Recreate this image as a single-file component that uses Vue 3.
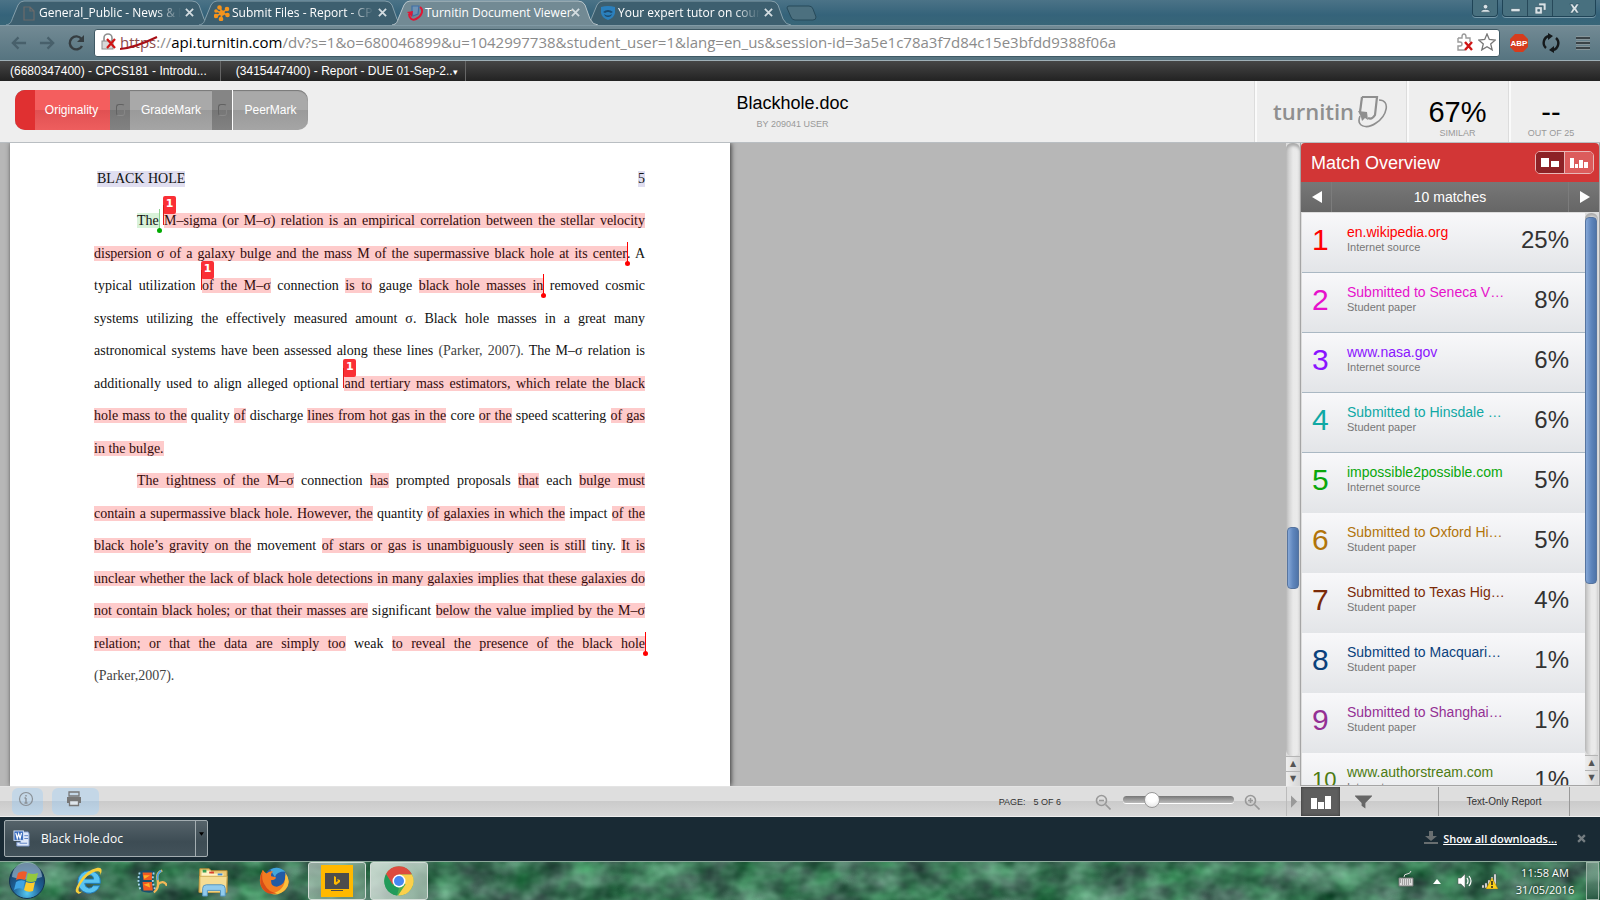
<script setup>
import { ref } from 'vue'

const tabs = [
  { title: 'General_Public - News & E', icon: 'file' },
  { title: 'Submit Files - Report - CP', icon: 'hub' },
  { title: 'Turnitin Document Viewer', icon: 'turnitin', active: true },
  { title: 'Your expert tutor on cour', icon: 'shield' }
]

const path = ref('/dv?s=1&o=680046899&u=1042997738&student_user=1&lang=en_us&session-id=3a5e1c78a3f7d84c15e3bfdd9388f06a')
const zoom = ref(22)

// Segments: t = text, m = matched, g = green match, f = faint, badge/pin = flag at start/end
const lines = [
  { indent: true, s: [{ t: 'The', g: 1, pin: 1 }, { t: ' ' }, { t: 'M–sigma (or M–σ) relation is an empirical correlation between the stellar velocity', m: 1, badge: 1 }] },
  { s: [{ t: 'dispersion σ of a galaxy bulge and the mass M of the supermassive black hole at its center', m: 1, pin: 1 }, { t: '. A' }] },
  { s: [{ t: 'typical utilization ' }, { t: 'of the M–σ', m: 1, badge: 1 }, { t: ' connection ' }, { t: 'is to', m: 1 }, { t: ' gauge ' }, { t: 'black hole masses in', m: 1, pin: 1 }, { t: ' removed cosmic' }] },
  { s: [{ t: 'systems utilizing the effectively measured amount σ. Black hole masses in a great many' }] },
  { s: [{ t: 'astronomical systems have been assessed along these lines ' }, { t: '(Parker, 2007).', f: 1 }, { t: ' The M–σ relation is' }] },
  { s: [{ t: 'additionally used to align alleged optional ' }, { t: 'and tertiary mass estimators, which relate the black', m: 1, badge: 1 }] },
  { s: [{ t: 'hole mass to the', m: 1 }, { t: ' quality ' }, { t: 'of', m: 1 }, { t: ' discharge ' }, { t: 'lines from hot gas in the', m: 1 }, { t: ' core ' }, { t: 'or the', m: 1 }, { t: ' speed scattering ' }, { t: 'of gas', m: 1 }] },
  { end: true, s: [{ t: 'in the bulge.', m: 1 }] },
  { indent: true, s: [{ t: 'The tightness of the M–σ', m: 1 }, { t: ' connection ' }, { t: 'has', m: 1 }, { t: ' prompted proposals ' }, { t: 'that', m: 1 }, { t: ' each ' }, { t: 'bulge must', m: 1 }] },
  { s: [{ t: 'contain a supermassive black hole. However, the', m: 1 }, { t: ' quantity ' }, { t: 'of galaxies in which the', m: 1 }, { t: ' impact ' }, { t: 'of the', m: 1 }] },
  { s: [{ t: 'black hole’s gravity on the', m: 1 }, { t: ' movement ' }, { t: 'of stars or gas is unambiguously seen is still', m: 1 }, { t: ' tiny. ' }, { t: 'It is', m: 1 }] },
  { s: [{ t: 'unclear whether the lack of black hole detections in many galaxies implies that these galaxies do', m: 1 }] },
  { s: [{ t: 'not contain black holes; or that their masses are', m: 1 }, { t: ' significant ' }, { t: 'below the value implied by the M–σ', m: 1 }] },
  { s: [{ t: 'relation; or that the data are simply too', m: 1 }, { t: ' weak ' }, { t: 'to reveal the presence of the black hole', m: 1, pin: 1 }] },
  { end: true, s: [{ t: '(Parker,2007).', f: 1 }] }
]

const matches = [
  { name: 'en.wikipedia.org', kind: 'Internet source', pct: 25, color: '#ff0000' },
  { name: 'Submitted to Seneca V…', kind: 'Student paper', pct: 8, color: '#e611cb' },
  { name: 'www.nasa.gov', kind: 'Internet source', pct: 6, color: '#8a14ff' },
  { name: 'Submitted to Hinsdale …', kind: 'Student paper', pct: 6, color: '#0fa8a4' },
  { name: 'impossible2possible.com', kind: 'Internet source', pct: 5, color: '#09a70c' },
  { name: 'Submitted to Oxford Hi…', kind: 'Student paper', pct: 5, color: '#b1740a' },
  { name: 'Submitted to Texas Hig…', kind: 'Student paper', pct: 4, color: '#7b2a08' },
  { name: 'Submitted to Macquari…', kind: 'Student paper', pct: 1, color: '#0a417c' },
  { name: 'Submitted to Shanghai…', kind: 'Student paper', pct: 1, color: '#943094' },
  { name: 'www.authorstream.com', kind: 'Internet source', pct: 1, color: '#4c7a12' }
]
</script>

<template>
  <div class="screen">
    <header class="strip">
      <nav class="tabs" aria-label="Browser tabs">
        <div v-for="t in tabs" :key="t.title" class="tab" :class="{ active: t.active }">
          <svg class="shape" viewBox="0 0 206 25" preserveAspectRatio="none" aria-hidden="true">
            <path d="M0 25 C5 24 5 22 7 17 L12 5 Q14 1 18 1 H186 Q191 1 193 5 L198 19 Q201 25 206 25" />
          </svg>
          <svg v-if="t.icon === 'file'" class="fav" viewBox="0 0 16 16"><path d="M3 2h6l4 4v9H3z M9 2v4h4" fill="none" stroke="#6b6b6b" stroke-width="1.2" /></svg>
          <svg v-else-if="t.icon === 'hub'" class="fav" viewBox="0 0 16 16">
            <g stroke="#f6941d" stroke-width="1.6" fill="#f6941d"><path d="M8 8L6 2M8 8L13 4M8 8L14 10M8 8L7 14M8 8L2 11M8 8L2 6" />
              <circle cx="5.500" cy="2.500" r="1.500" /><circle cx="13" cy="4" r="1.500" /><circle cx="13.500" cy="10" r="1.500" /><circle cx="7" cy="14" r="1.500" /><circle cx="2" cy="11" r="1.500" /><circle cx="2" cy="6" r="1" /><circle cx="8" cy="8" r="2" /></g>
          </svg>
          <svg v-else-if="t.icon === 'turnitin'" class="fav" viewBox="0 0 16 16"><path d="M5 1h7l-1 8-5 2-1-3z" fill="#6f93b4" stroke="#3f6fa5" stroke-width="1.200" /><path d="M13 2C17 5 15 11 9 14C5 16 2 13 2 9" fill="none" stroke="#de1837" stroke-width="2" /><path d="M0 7l6-1-1 6z" fill="#de1837" /></svg>
          <svg v-else class="fav" viewBox="0 0 16 16"><path d="M1 2Q8 0 15 2V8Q14 13 8 15Q2 13 1 8z" fill="#2b80bd" /><path d="M3 7Q8 3 13 7L11 8Q8 6 5 8zM4 9Q8 12 12 9L11 11Q8 13 5 11z" fill="#1c4b70" /></svg>
          <a href="#" class="tab-title">{{ t.title }}</a>
          <button class="x" :aria-label="'Close ' + t.title"><svg viewBox="0 0 10 10"><path d="M1 1l8 8M9 1l-8 8" /></svg></button>
        </div>
        <button class="newtab" aria-label="New tab"><svg viewBox="0 0 32 16"><path d="M4 1H24Q27 1 28 4L31 12Q31 15 28 15H10Q7 15 6 12L2 3Q2 1 4 1z" /></svg></button>
      </nav>
      <div class="wins">
        <div class="wgroup"><button class="w-user" aria-label="User"><svg viewBox="0 0 12 12"><circle cx="6" cy="4" r="2.500" /><path d="M1 10Q1 7 6 7T11 10z" /></svg></button></div>
        <div class="wgroup">
          <button aria-label="Minimize"><svg viewBox="0 0 12 12"><rect x="1" y="6" width="10" height="3.500" rx="1" /></svg></button>
          <button aria-label="Restore"><svg viewBox="0 0 12 12"><path d="M4 0h8v8h-3V3H4zM0 4h8v8H0zM3 7v2h2V7z" fill-rule="evenodd" /></svg></button>
          <button class="w-close" aria-label="Close"><svg viewBox="0 0 12 12"><path d="M1 1h3l2 3 2-3h3L8 6l3 5H8L6 8l-2 3H1l3-5z" /></svg></button>
        </div>
      </div>
    </header>

    <div class="toolbar">
      <button class="nav" aria-label="Back"><svg viewBox="0 0 18 16"><path d="M9 2L3 8l6 6M3 8h14" /></svg></button>
      <button class="nav" aria-label="Forward"><svg viewBox="0 0 18 16"><path d="M9 2l6 6-6 6M15 8H1" /></svg></button>
      <button class="nav reload" aria-label="Reload"><svg viewBox="0 0 18 18"><path d="M14.500 5A6.500 6.500 0 1 0 15 12" /><path class="tip" d="M10 8h7V1z" /></svg></button>
      <div class="omni">
        <svg class="lock" viewBox="0 0 16 18"><path d="M3 8V5a4 4 0 0 1 8 0v3" fill="none" stroke="#8e8e8e" stroke-width="1.600" /><rect x="1" y="8" width="11" height="8" fill="#d8d8d8" stroke="#8e8e8e" /><path d="M6 6l8 9M14 6l-8 9" stroke="#cf1515" stroke-width="2.200" /></svg>
        <label class="host" for="address"><span class="scheme">https<svg viewBox="0 0 38 14" aria-hidden="true"><path d="M0 13Q14 12 37 1" /></svg></span><span class="dim">://</span>api.turnitin.com</label>
        <input id="address" v-model="path" type="text" spellcheck="false">
        <svg class="oi" viewBox="0 0 18 18"><path d="M2 5h4V4q0-3 2-3t2 3v1h4v4M2 5v4h2q2 0 2 2t-2 2H2v4h7" fill="none" stroke="#9b9b9b" stroke-width="1.400" /><path d="M9 9l7 8M16 9l-7 8" stroke="#cf1515" stroke-width="2.400" /></svg>
        <svg class="oi" viewBox="0 0 18 18"><path d="M9 1l2.300 5.500 6 .5-4.600 3.900 1.500 6L9 13.700 3.800 16.900l1.500-6L.7 7l6-.5z" fill="#fff" stroke="#777" stroke-width="1.300" /></svg>
      </div>
      <button class="ext" aria-label="AdBlock"><svg viewBox="0 0 20 20"><path d="M6 1h8l5 5v8l-5 5H6l-5-5V6z" fill="#d63c1d" /><text x="10" y="13" text-anchor="middle">ABP</text></svg></button>
      <button class="ext" aria-label="Refresh extension"><svg viewBox="0 0 20 20"><path d="M8 3A7 7 0 0 0 5 15M12 17A7 7 0 0 0 15 5" fill="none" stroke="#15191b" stroke-width="2.400" /><path d="M7 0l5 3-5 4zM13 20l-5-3 5-4z" fill="#15191b" /></svg></button>
      <button class="ext" aria-label="Menu"><svg viewBox="0 0 20 20"><path d="M3 5h14M3 10h14M3 15h14" stroke="#a1b0b6" stroke-width="4" /><path d="M3 5h14M3 10h14M3 15h14" stroke="#3a4347" stroke-width="2.600" /></svg></button>
    </div>

    <nav class="crumbs" aria-label="Assignment">
      <a href="#" class="c1">(6680347400) - CPCS181 - Introdu...</a>
      <a href="#" class="c2">(3415447400) - Report - DUE 01-Sep-2..<span class="caret">▾</span></a>
    </nav>

    <section class="head">
      <div class="modes">
        <button class="on">Originality</button>
        <i class="notch"></i>
        <button>GradeMark</button>
        <i class="notch"></i>
        <button class="last">PeerMark</button>
      </div>
      <div class="title"><h1>Blackhole.doc</h1><small>BY 209041 USER</small></div>
      <div class="stat logo">
        <span>turnitin</span>
        <svg viewBox="0 0 34 34" aria-hidden="true"><path d="M6 2H21L19 20Q16 25 12 23" /><path d="M6 2L4 17" /><path class="thin" d="M23 5C35 5 31 21 20 28C10 35 0 31 4 21" /><path class="fill" d="M2 16l9 1 1 8-3-2-3 3-1-4z" /></svg>
      </div>
      <div class="stat sim"><b>67%</b><small>SIMILAR</small></div>
      <div class="stat grade"><b>--</b><small>OUT OF 25</small></div>
    </section>

    <main class="work">
      <div class="viewer">
        <article class="page">
          <p class="running"><span class="lav">BLACK HOLE</span><span class="lav">5</span></p>
          <p v-for="(l, i) in lines" :key="i" class="line" :class="{ indent: l.indent, end: l.end }"><template v-for="(s, j) in l.s" :key="j"><mark v-if="s.m || s.g" :class="{ green: s.g }">{{ s.t }}<b v-if="s.badge" class="badge">1</b><i v-if="s.pin" class="pin"></i></mark><span v-else :class="{ faint: s.f }">{{ s.t }}</span></template></p>
        </article>
      </div>
      <div class="scroll main-scroll" aria-hidden="true">
        <div class="track"><i class="thumb" :style="{ top: '62.6%', height: '10.2%' }"></i></div>
        <span class="arr">▲</span><span class="arr">▼</span>
      </div>
      <aside class="panel">
        <div class="ph">
          <h2>Match Overview</h2>
          <div class="toggle">
            <button class="sel" aria-label="Match overview"><svg viewBox="0 0 20 12"><path d="M1 1h8v9H1zM11 4h8v6h-8z" /></svg></button>
            <button aria-label="All sources"><svg viewBox="0 0 20 12"><path d="M1 1h4v10H1zM6 7h3v4H6zM10 3h4v8h-4zM15 5h4v6h-4z" /></svg></button>
          </div>
        </div>
        <div class="pn">
          <button aria-label="Previous"><svg viewBox="0 0 10 12"><path d="M10 0v12L0 6z" /></svg></button>
          <span>10 matches</span>
          <button aria-label="Next"><svg viewBox="0 0 10 12"><path d="M0 0v12l10-6z" /></svg></button>
        </div>
        <div class="pl">
          <ol>
            <li v-for="(m, i) in matches" :key="m.name" :class="{ ruled: i < 4 }">
              <span class="num" :class="{ two: i > 8 }" :style="{ color: m.color }">{{ i + 1 }}</span>
              <span class="src"><a href="#" :style="{ color: m.color }">{{ m.name }}</a><small>{{ m.kind }}</small></span>
              <span class="pct">{{ m.pct }}%</span>
            </li>
          </ol>
          <div class="scroll" aria-hidden="true">
            <div class="track"><i class="thumb" :style="{ top: '0.8%', height: '67.7%' }"></i></div>
            <span class="arr">▲</span><span class="arr">▼</span>
          </div>
        </div>
      </aside>
    </main>

    <footer class="foot">
      <button class="fb info" aria-label="Info"><svg viewBox="0 0 16 16"><circle cx="8" cy="8" r="6.500" fill="none" stroke="#8a9096" stroke-width="1.200" /><path d="M8 7v5M8 4v1.500M6.500 12h3M6.500 7H8" stroke="#8a9096" stroke-width="1.400" /></svg></button>
      <button class="fb print" aria-label="Print"><svg viewBox="0 0 16 16"><path d="M3 1h10v4H3z" fill="none" stroke="#777" stroke-width="1.300" /><path d="M1 6h14v6h-2V9H3v3H1z" fill="#777" /><path d="M3.500 9.500h9v5h-9z" fill="#dfe6ec" stroke="#777" stroke-width="1.300" /></svg></button>
      <div class="pager"><span>PAGE:</span><span>5 OF 6</span></div>
      <button class="mag" aria-label="Zoom out"><svg viewBox="0 0 16 16"><circle cx="6.500" cy="6.500" r="5" /><path d="M10.500 10.500l5 5M4 6.500h5" /></svg></button>
      <input v-model="zoom" class="range" type="range" min="0" max="100" aria-label="Zoom">
      <button class="mag" aria-label="Zoom in"><svg viewBox="0 0 16 16"><circle cx="6.500" cy="6.500" r="5" /><path d="M10.500 10.500l5 5M4 6.500h5M6.500 4v5" /></svg></button>
      <button class="fold" aria-label="Collapse panel"><svg viewBox="0 0 8 14"><path d="M0 0v14l7-7z" /></svg></button>
      <div class="fr">
        <button class="bars" aria-label="Overview"><svg viewBox="0 0 20 14"><path d="M0 3h6v11H0zM7 7h6v7H7zM14 1h6v13h-6z" /></svg></button>
        <button class="funnel" aria-label="Filter"><svg viewBox="0 0 18 14"><path d="M0 0h18v1l-7 7v6l-4-3V8L0 1z" /></svg></button>
        <button class="txt">Text-Only Report</button>
      </div>
    </footer>

    <section class="downloads">
      <div class="dl">
        <button class="dl-file">
          <svg viewBox="0 0 18 18"><path d="M8 2h8l1 2v13H4v-4h4z" fill="#dfe9fa" stroke="#7794c7" /><path d="M12 6h4M12 9h4M7 14h8" stroke="#5a80c4" /><rect x="1" y="1" width="10" height="10" fill="#3468bb" stroke="#d5e2f8" /><path d="M3 3l1.500 6L6 4l1.500 5L9 3" fill="none" stroke="#fff" stroke-width="1.300" /></svg>
          Black Hole.doc
        </button>
        <button class="dl-menu" aria-label="Options"><svg viewBox="0 0 6 4"><path d="M0 0h6L3 4z" /></svg></button>
      </div>
      <svg class="dn" viewBox="0 0 14 14" aria-hidden="true"><path d="M5 0h4v5h4L7 10 1 5h4zM0 11h14v2H0z" /></svg>
      <a href="#">Show all downloads...</a>
      <button class="dx" aria-label="Close downloads"><svg viewBox="0 0 8 8"><path d="M1 1l6 6M7 1L1 7" /></svg></button>
    </section>

    <footer class="taskbar">
      <svg class="leaf" aria-hidden="true">
        <filter id="foliage" x="0" y="0" width="100%" height="100%" color-interpolation-filters="sRGB"><feTurbulence type="fractalNoise" baseFrequency="0.03 0.04" numOctaves="3" seed="8" /><feColorMatrix values="0.45 0.25 0 0 -0.1  0.65 0 0 0 0.13  0.5 0.2 0 0 0  0 0 0 0 1" /></filter>
        <rect width="100%" height="100%" filter="url(#foliage)" />
      </svg>
      <div class="apps">
        <button class="start" aria-label="Start"><svg viewBox="0 0 38 38"><defs><radialGradient id="orb" cx=".5" cy=".85" r=".8"><stop offset="0" stop-color="#55c8f2" /><stop offset=".5" stop-color="#1d5f95" /><stop offset="1" stop-color="#183a5c" /></radialGradient></defs><circle cx="19" cy="19" r="17.500" fill="url(#orb)" stroke="#143350" /><path d="M4 15A15 15 0 0 1 34 15Q19 20 4 15z" fill="#b8d3e6" opacity=".55" /><path d="M10 11q4-3 9-1l-2 8q-5-2-9 0z" fill="#ef5a2a" /><path d="M20 11q5 2 10 0l-2 8q-5 2-10 0z" fill="#94c83d" /><path d="M8 20q4-3 9-1l-2 8q-5-2-9 1z" fill="#3fa4e4" /><path d="M18 20q5 2 9 0l-2 9q-5 2-9-1z" fill="#fdcb2c" /></svg></button>
        <button aria-label="Internet Explorer"><svg viewBox="0 0 34 34"><path d="M17 6a12 12 0 1 0 11.500 16h-7q-1.500 3-5 2.500-4-1-4-5h16.500Q30 7 17 6zM12.500 15q1-4.500 5-4.500t4.500 4.500z" fill="#5ac4f2" stroke="#1f7ec2" fill-rule="evenodd" /><path d="M5 30Q0 29 6 19Q14 5 26 3Q33 2 29 11Q30 4 21 8Q10 14 6 25Q5 30 10 28Q6 32 5 30z" fill="#f7cf3c" /></svg></button>
        <button aria-label="Movie player"><svg viewBox="0 0 34 34"><path d="M5 7q8-3 16 0-4 10 2 21-8 3-16 0-5-10-2-21z" fill="#17506d" /><path d="M8 8h10v8H9zM8 18h10l1 9H9z" fill="#f05a23" /><path d="M9 11h7l-6 4zM9 21l7 3-1-5z" fill="#ffb02b" /><path d="M5 8q-3 9 1 19M20 8q-3 10 2 19" stroke="#a7d5e7" stroke-width="2" stroke-dasharray="2 2" fill="none" /><path d="M29 6q-7 2-5 10 2 9-4 13M24 21q6-6 10 1" fill="none" stroke="#f4b857" stroke-width="2.500" /><path d="M28 6q-5 3-4 10" fill="none" stroke="#4ba3df" stroke-width="2" /></svg></button>
        <button aria-label="File Explorer"><svg viewBox="0 0 34 34"><path d="M3 4h10l2 2h17v23H2z" fill="#e9c975" stroke="#b48b35" /><path d="M5 6h10v3h13v16H4z" fill="#fff3c5" /><path d="M3 12h29l-1 17H3z" fill="#f5dd94" stroke="#cda950" /><path d="M6 5h4v3H6z" fill="#3a9e52" /><path d="M13 7h5v2h-5z" fill="#db4032" /><path d="M22 9h5v2h-5z" fill="#3d8ad6" /><path d="M6 33v-8q0-4 4-4h16q4 0 4 4v8h-5v-6H11v6z" fill="#90cbed" stroke="#5393bd" /></svg></button>
        <button aria-label="Firefox"><svg viewBox="0 0 34 34"><circle cx="18" cy="16" r="13" fill="#235ba5" /><path d="M12 5Q20 0 28 7Q18 7 17 13z" fill="#41a7db" /><path d="M4 5q2 3 4 4 4-3 7-2-3 2-2 5l5 1q0 3-5 3-1 7 6 7 9-1 9-12 5 5 3 10-3 10-14 9Q5 31 2 22-1 14 4 5z" fill="#f37b21" /><path d="M28 8q7 10 0 18-8 8-16 4 17-1 16-22z" fill="#fbc03d" /><path d="M4 6q-2 9 2 15 4 8 13 9-12 3-17-8-2-8 2-16z" fill="#d94d17" /></svg></button>
        <button class="win" aria-label="Bing Desktop"><svg viewBox="0 0 32 32"><path d="M0 0h32v32H0z" fill="#ffb900" /><path d="M4 8h24v16H4zM10 25h12v1H10z" fill="#4d4d4d" /><path d="M13 11l2 1v5l2-1-1-2 3 1v2l-4 3-2-1z" fill="#ffb900" /></svg></button>
        <button class="win bright" aria-label="Chrome"><svg viewBox="0 0 32 32"><circle cx="16" cy="16" r="14.500" fill="#4caf50" /><path d="M3 9A14.500 14.500 0 0 1 29 9.500H16L9.500 19.500z" fill="#dd4b3e" /><path d="M29 9.500A14.500 14.500 0 0 1 15 30.500L22.500 19.500 16 9.500z" fill="#fcd04b" /><path d="M3 9L9.500 19.700 16 23l-2 7.500A14.500 14.500 0 0 1 3 9z" fill="#219b5a" /><circle cx="16" cy="16" r="6.500" fill="#fff" /><circle cx="16" cy="16" r="5" fill="#4688f1" /></svg></button>
      </div>
      <div class="tray">
        <svg class="kb" viewBox="0 0 16 16"><path d="M1 7h14v8H1z" fill="#ddd" stroke="#777" /><path d="M2 9h12M2 11h12M4 13h8" stroke="#666" stroke-dasharray="1 1" /><path d="M6 6q0-3 3-3t4-3" fill="none" stroke="#ddd" /></svg>
        <svg class="up" viewBox="0 0 8 5"><path d="M0 5h8L4 0z" fill="#fff" /></svg>
        <svg class="vol" viewBox="0 0 16 16"><path d="M1 5h3l4-4v14l-4-4H1z" fill="#fff" stroke="#555" stroke-width=".5" /><path d="M10 5q2 3 0 6M12 3q4 5 0 10" fill="none" stroke="#fff" stroke-width="1.200" /></svg>
        <svg class="net" viewBox="0 0 17 16"><path d="M1 12h2v3H1zM4 10h2v5H4zM7 7h2v8H7zM10 4h2v11h-2zM13 1h2v14h-2z" fill="#fff" stroke="#444" stroke-width=".5" /><path d="M11 5l6 11H5z" fill="#fbd01c" stroke="#b38b00" stroke-width=".6" /><path d="M11 8v4M11 13v2" stroke="#222" stroke-width="1.500" /></svg>
        <time>11:58 AM<br>31/05/2016</time>
        <button class="desk" aria-label="Show desktop"></button>
      </div>
    </footer>
  </div>
</template>

<style>
html, body { height: 100%; overflow: hidden; }
</style>

<style scoped>
* { box-sizing: border-box; }
svg { display: block; }
button { border: 0; padding: 0; margin: 0; background: none; font: inherit; color: inherit; display: flex; align-items: center; justify-content: center; flex: none; }
a { color: inherit; text-decoration: none; }
p, h1, h2, ol { margin: 0; padding: 0; font-weight: 400; }
.screen { height: 100vh; display: flex; flex-direction: column; overflow: hidden; font-family: "Liberation Sans", Arial, sans-serif; font-size: 12px; background: #b7b7b7; }

.strip { flex: none; height: 25px; background: linear-gradient(#4b7387, #35637a 60%, #386678); display: flex; justify-content: space-between; font-family: "Open Sans", "Noto Sans", sans-serif; color: #fff; }
.tabs { display: flex; padding-left: 6px; align-items: stretch; }
.tab { position: relative; width: 206px; margin-right: -13px; padding: 0 16px 0 15px; display: flex; align-items: center; }
.tab.active { z-index: 2; }
.shape { position: absolute; inset: 0; width: 100%; height: 100%; }
.shape path { fill: #3d5f6f; stroke: #86a0ac; stroke-width: 1; }
.active .shape path { fill: #728a94; stroke: #b8c5cb; }
.fav { position: relative; width: 16px; height: 16px; flex: none; }
.tab-title { position: relative; flex: 1; min-width: 0; margin-left: 2px; white-space: nowrap; font-size: 12px; line-height: 24px; mask-image: linear-gradient(90deg, #000 82%, transparent); }
.active .tab-title { mask-image: none; }
.x { position: relative; width: 14px; height: 14px; margin-left: 1px; }
.x svg { width: 9px; height: 9px; }
.x path { stroke: #d3dce0; stroke-width: 2; fill: none; }
.newtab { width: 32px; margin-left: 7px; }
.newtab svg { width: 32px; height: 16px; }
.newtab path { fill: #4c707f; stroke: #274a5a; }
.wins { display: flex; gap: 4px; padding-right: 4px; }
.wgroup { display: flex; height: 17px; border: 1px solid #1f4457; border-top: 0; border-radius: 0 0 4px 4px; box-shadow: 0 1px 0 #7699a9; background: #48707f; }
.wgroup button { width: 25px; height: 16px; border-right: 1px solid #27495a; }
.wgroup .w-close { width: 42px; border: 0; }
.wgroup .w-user { border: 0; width: 24px; }
.wgroup svg { width: 11px; height: 11px; fill: #d9e2e6; stroke: #27495a; stroke-width: .6; }

.toolbar { flex: none; height: 36px; display: flex; align-items: center; background: linear-gradient(#728a94, #567480); border-top: 1px solid #819aa5; border-bottom: 1px solid #9fb0b7; padding: 0 7px 1px 8px; }
.nav { width: 20px; height: 20px; margin-right: 9px; }
.nav svg { width: 17px; height: 16px; fill: none; stroke: #48606b; stroke-width: 2.400; }
.nav.reload svg { width: 18px; height: 18px; stroke: #353d41; }
.nav.reload { margin-right: 8px; }
.nav .tip { fill: #353d41; stroke: none; }
.omni { flex: 1; height: 28px; background: #fff; border: 1px solid #3f5964; border-radius: 3px; display: flex; align-items: center; padding: 0 3px 1px 6px; font: 15px/24px "Open Sans", "Noto Sans", sans-serif; min-width: 0; }
.lock { width: 16px; height: 18px; margin-right: 3px; flex: none; }
.host { white-space: nowrap; color: #000; }
.dim { color: #8b8b8b; }
.scheme { position: relative; color: #8b4b4b; }
.scheme svg { position: absolute; left: 0; top: 4px; width: 38px; height: 14px; }
.scheme path { fill: none; stroke: #a80f16; stroke-width: 2; }
.omni input { flex: 1; min-width: 0; border: 0; outline: 0; padding: 0; background: none; font: inherit; color: #8b8b8b; }
.oi { width: 18px; height: 18px; margin-left: 4px; flex: none; }
.ext { width: 20px; height: 20px; margin-left: 12px; }
.ext:nth-of-type(4) { margin-left: 9px; }
.ext svg { width: 20px; height: 20px; }
.ext text { fill: #fff; font: 700 8px "Liberation Sans", sans-serif; }

.crumbs { flex: none; height: 20px; background: linear-gradient(#464646, #222); color: #fff; display: flex; line-height: 20px; }
.crumbs a { border-right: 1px solid #666; white-space: nowrap; }
.c1 { padding: 0 13px 0 10px; }
.c2 { padding: 0 7px 0 15px; }
.caret { font-size: 9px; }

.head { flex: none; height: 62px; background: #eee; border-bottom: 1px solid #b9bec2; display: flex; }
.modes { margin: 9px 0 0 15px; height: 40px; display: flex; border-radius: 10px; overflow: hidden; background: linear-gradient(#a9a9a9 50%, #9a9a9a 50%, #a5a5a5); color: #fff; box-shadow: inset 0 1px 1px #777; }
.modes button { width: 82px; font-size: 12px; }
.modes .on { width: 95px; padding-right: 2px; border-left: 20px solid #e03031; background: linear-gradient(#f45e5e 50%, #e05052 50%, #ee5e5e); }
.modes .last { width: 76px; border-left: 1px solid #fff; }
.notch { width: 20px; background: linear-gradient(#858585 50%, #767676 50%, #828282); display: flex; align-items: center; justify-content: center; }
.notch::after { content: ""; width: 7px; height: 10px; border-radius: 3px; border: 1px solid #626262; border-bottom-color: #8a8a8a; border-right-color: #858585; }
.title { flex: 1; padding: 11px 0 0 22px; text-align: center; }
.title h1 { font-size: 18px; line-height: 22px; color: #000; }
small { display: block; font-size: 9px; line-height: 12px; color: #999; }
.title small { margin-top: 4px; }
.stat { border-left: 2px solid #fafafa; box-shadow: -1px 0 0 #dcdcdc; text-align: center; }
.stat b { display: block; font-weight: 400; font-size: 29px; line-height: 32px; color: #000; margin-top: 15px; }
.stat small { margin-top: -1px; }
.logo { width: 152px; display: flex; padding: 14px 0 0 16px; color: #8f8f8f; }
.logo span { font: 600 22px/32px "Open Sans", "Noto Sans", sans-serif; }
.logo svg { width: 34px; height: 34px; margin-left: 2px; fill: none; stroke: #8f8f8f; stroke-width: 2.200; }
.logo .thin { stroke-width: 1.600; }
.logo .fill { fill: #8f8f8f; stroke: none; }
.sim { width: 102px; padding-right: 3px; }
.grade { width: 91px; padding-right: 9px; }

.work { flex: 1; min-height: 0; display: flex; }
.viewer { flex: 1; min-width: 0; overflow: hidden; padding-left: 10px; background: #b7b7b7; }
.page { width: 720px; height: 100%; background: #fff; padding: 20px 85px 0 84px; box-shadow: 1px 0 5px #333; font: 14px/32px "Liberation Serif", "Times New Roman", serif; color: #111; }
.running { display: flex; justify-content: space-between; padding-left: 3px; margin-bottom: 10px; align-items: center; height: 32px; }
.lav { background: #e0def0; line-height: 16px; }
.line { text-align: justify; text-align-last: justify; white-space: nowrap; }
.line:nth-child(odd) { line-height: 33px; }
.indent { padding-left: 43px; }
.end { text-align-last: left; }
mark { position: relative; background: #fecbcb; color: #330b0b; }
mark.green { background: #d9f2d9; color: #111; }
.faint { color: #444; }
.badge { position: absolute; left: -1px; top: -17px; width: 13px; height: 18px; border-radius: 2px; background: #fa2f35; color: #fff; font: 700 11px/16px "DejaVu Sans", sans-serif; text-align: center; text-align-last: center; }
.badge::after { content: ""; position: absolute; left: 0; top: 9px; width: 1px; height: 20px; background: #e01818; }
.pin { position: absolute; right: -1px; top: -4px; width: 1px; height: 20px; background: #f00; }
.pin::after { content: ""; position: absolute; left: -2px; bottom: -4px; width: 5px; height: 5px; border-radius: 50%; background: #f00; }
.green .pin { background: #8fd08f; }
.green .pin::after { background: #0a0; }

.scroll { width: 13px; flex: none; display: flex; flex-direction: column; background: #ddd; }
.main-scroll { width: 14px; }
.track { position: relative; flex: 1; background: linear-gradient(90deg, #c2c2c2, #e9e9e9 50%, #ececec); border-radius: 6px; box-shadow: inset 0 3px 3px #aaa; }
.thumb { position: absolute; right: 1px; width: 12px; border-radius: 4px; border: 1px solid #56749f; background: linear-gradient(90deg, #86a8d8, #5f86bd 50%, #4f74a8); }
.arr { height: 15px; border-top: 1px solid #b5b5b5; background: linear-gradient(90deg, #eee, #d5d5d5); font: 8px/14px "DejaVu Sans", sans-serif; text-align: center; color: #555; }

.panel { width: 300px; flex: none; border: 1px solid #a5a5a5; border-width: 0 1px 1px; background: #ddd; display: flex; flex-direction: column; min-height: 0; }
.ph { height: 39px; flex: none; border-radius: 4px 4px 0 0; background: #d23636; color: #fff; display: flex; align-items: center; justify-content: space-between; padding: 0 5px 0 10px; }
.ph h2 { font-size: 18px; line-height: 22px; }
.toggle { display: flex; border: 1px solid #e8b7b7; border-radius: 5px; overflow: hidden; height: 23px; }
.toggle button { width: 28px; background: #dc5c5c; }
.toggle button.sel { background: #8d2226; border-right: 1px solid #e8b7b7; width: 29px; }
.toggle svg { width: 20px; height: 12px; fill: #fff; }
.pn { height: 30px; flex: none; background: linear-gradient(#777, #666); color: #fff; display: flex; justify-content: space-between; align-items: center; font-size: 14px; }
.pn button { width: 31px; height: 30px; padding-left: 2px; border: 0 solid #7c7c7c; border-right-width: 1px; }
.pn button:last-child { border-width: 0 0 0 1px; }
.pn svg { width: 10px; height: 12px; fill: #fff; }
.pl { flex: 1; min-height: 0; display: flex; padding: 1px 1px 0; border-radius: 0 0 4px 4px; }
.pl ol { flex: 1; list-style: none; overflow: hidden; min-width: 0; }
.pl li { height: 60px; display: flex; background: linear-gradient(#f8f8fa, #e3e5e8); padding: 0 16px 0 10px; }
.pl li.ruled { border-bottom: 1px solid #aab8c3; }
.num { width: 35px; font-size: 30px; line-height: 54px; }
.num.two { font-size: 22px; }
.src { flex: 1; padding-top: 10px; }
.src a { display: block; font-size: 14px; line-height: 18px; white-space: nowrap; }
.src small { font-size: 11px; line-height: 13px; color: #777; }
.pct { font-size: 24px; line-height: 54px; color: #333; }

.foot { flex: none; height: 31px; display: flex; align-items: center; background: linear-gradient(#dedede 50%, #cbcbcb 50%, #d8d8d8); border-top: 1px solid #e4e4e4; border-bottom: 1px solid #eee; padding-left: 12px; }
.fb { height: 27px; padding-right: 3px; border-radius: 6px; background: linear-gradient(#c4d7e7 50%, #b5cadc 50%, #c0d6e8); }
.fb svg { width: 16px; height: 16px; margin-bottom: 6px; }
.info { width: 31px; margin-right: 9px; }
.print { width: 47px; }
.pager { margin-left: auto; display: flex; gap: 8px; font-size: 9px; color: #333; margin-right: 34px; }
.mag { width: 16px; height: 16px; }
.mag svg { width: 16px; height: 16px; fill: none; stroke: #999; stroke-width: 1.600; }
.range { appearance: none; width: 111px; height: 16px; margin: 0 10px 4px 12px; background: transparent; flex: none; }
.range::-webkit-slider-runnable-track { height: 7px; border-radius: 4px; background: linear-gradient(#777, #bbb); box-shadow: 0 1px 0 #fff; }
.range::-webkit-slider-thumb { appearance: none; width: 16px; height: 16px; margin-top: -4px; border-radius: 50%; background: radial-gradient(circle at 50% 30%, #fff 40%, #ddd); border: 1px solid #999; }
.fold { width: 15px; height: 29px; margin-left: 26px; border-left: 1px solid #bbb; }
.fold svg { width: 7px; height: 13px; fill: #999; }
.fr { width: 299px; height: 29px; display: flex; flex: none; }
.bars { width: 39px; background: #5e5e5e; box-shadow: inset 0 0 3px #333; }
.bars svg { width: 20px; height: 14px; fill: #fff; }
.funnel { width: 46px; }
.funnel svg { width: 17px; height: 14px; fill: #666; }
.txt { margin-left: 52px; width: 132px; border: solid #999; border-width: 0 1px; font-size: 10px; color: #333; }

.downloads { flex: none; height: 44px; background: #192a34; display: flex; align-items: center; padding: 0 14px 2px 4px; font: 12px "Open Sans", "Noto Sans", sans-serif; color: #fff; }
.dl { display: flex; height: 37px; margin-right: auto; border: 1px solid #a3adb1; border-radius: 2px; background: linear-gradient(#55636a, #3d4c54 60%, #42525a); }
.dl-file { width: 190px; justify-content: flex-start; padding-left: 8px; }
.dl-file svg { width: 17px; height: 17px; margin-right: 11px; }
.dl-menu { width: 12px; border-left: 1px solid #a3adb1; padding-bottom: 8px; }
.dl-menu svg { width: 5px; height: 4px; fill: #000; }
.dn { width: 14px; height: 14px; fill: #686e70; margin-right: 5px; }
.downloads a { text-decoration: underline; font-weight: 600; font-size: 11px; }
.dx { width: 10px; height: 10px; margin-left: 19px; }
.dx svg { width: 9px; height: 9px; stroke: #747c80; stroke-width: 2; }

.taskbar { position: relative; flex: none; height: 39px; overflow: hidden; display: flex; justify-content: space-between; border-top: 1px solid #8fab9c; color: #fff; background: #3a6a4f; }
.leaf { position: absolute; inset: 0; width: 100%; height: 100%; }
.apps { position: relative; display: flex; align-items: center; padding-left: 8px; }
.apps button { width: 34px; height: 38px; margin-right: 28px; }
.apps svg { width: 32px; height: 32px; }
.apps .start { width: 38px; margin-right: 26px; }
.apps .start svg { width: 38px; height: 38px; }
.apps button:nth-child(5) { margin-right: 16px; }
.apps .win { width: 58px; margin-right: 4px; border: 1px solid #d3ddd7; border-radius: 3px; background: linear-gradient(135deg, rgba(225, 235, 229, .6), rgba(120, 155, 135, .5)); }
.apps .bright { background: linear-gradient(135deg, rgba(240, 245, 242, .8), rgba(175, 200, 185, .7)); }
.tray { position: relative; display: flex; align-items: center; font-family: "Open Sans", "Noto Sans", sans-serif; }
.kb { width: 16px; height: 16px; margin: 0 19px 4px 0; }
.up { width: 8px; height: 5px; margin-right: 16px; }
.vol { width: 16px; height: 16px; margin-right: 8px; }
.net { width: 17px; height: 16px; margin-right: 12px; }
time { width: 70px; font-size: 11px; line-height: 17px; text-align: center; margin-right: 6px; text-shadow: 0 0 3px #000; }
.desk { width: 13px; height: 38px; border: 1px solid #9db5a8; background: linear-gradient(rgba(160, 190, 175, .6), rgba(40, 80, 65, .6)); margin-right: 1px; }
</style>
